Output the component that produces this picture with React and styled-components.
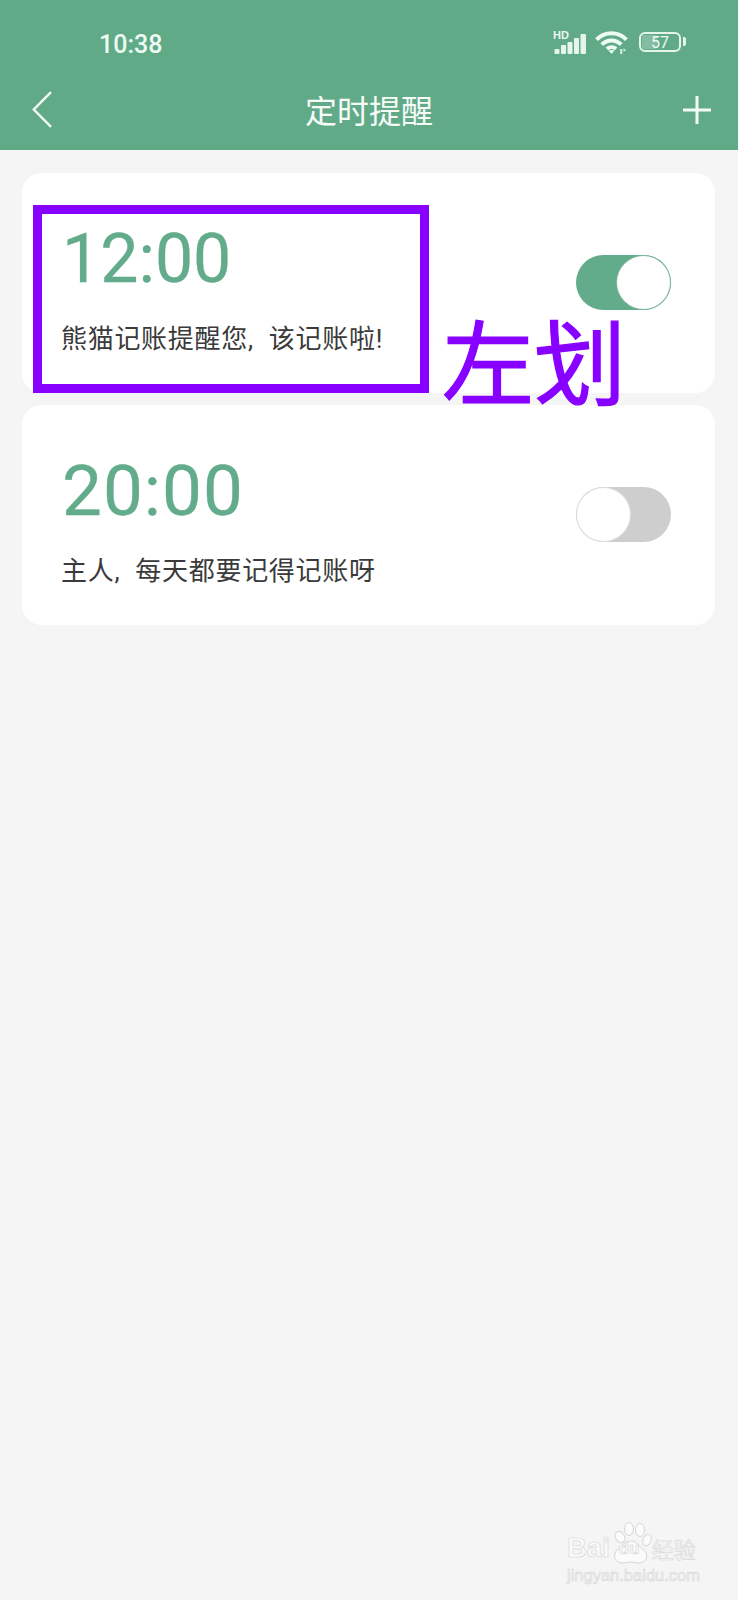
import React from "react";
import styled, { createGlobalStyle } from "styled-components";

const GlobalStyle = createGlobalStyle`
  html, body {
    margin: 0;
    padding: 0;
    background: #f5f5f5;
  }
  * {
    box-sizing: border-box;
  }
`;

const GREEN = "#60aa88";
const FONT = `Roboto, "Noto Sans CJK SC", sans-serif`;

const Screen = styled.div`
  position: relative;
  width: 738px;
  height: 1600px;
  overflow: hidden;
  background: #f5f5f5;
  font-family: ${FONT};
`;

const Header = styled.header`
  height: 150px;
  background: ${GREEN};
  color: #fff;
`;

const StatusBar = styled.div`
  height: 82px;
  padding: 30px 57px 0 99px;
  display: flex;
  justify-content: space-between;
  align-items: flex-start;
`;

const Clock = styled.span`
  font-size: 25px;
  font-weight: 500;
  line-height: 29px;
  color: #eefaf3;
`;

const StatusIcons = styled.div`
  display: flex;
  align-items: center;
  gap: 8px;
`;

const Battery = styled.div`
  position: relative;
  width: 42px;
  height: 20px;
  margin-left: 3px;
  border: 2.5px solid #e6f5ec;
  border-radius: 6px;
  display: flex;
  align-items: center;
  justify-content: center;
  font-size: 16px;
  line-height: 15px;
  color: #eefaf3;
  &::before {
    content: "";
    position: absolute;
    left: 1px;
    top: 1px;
    bottom: 1px;
    width: 15px;
    background: rgba(255, 255, 255, 0.22);
    border-radius: 1px;
  }
  &::after {
    content: "";
    position: absolute;
    right: -7px;
    top: 3px;
    width: 3px;
    height: 9px;
    background: #e6f5ec;
    border-radius: 0 2px 2px 0;
  }
`;

const NavBar = styled.div`
  height: 68px;
  padding: 0 27px 13px 32px;
  display: flex;
  align-items: center;
  justify-content: space-between;
`;

const Title = styled.h1`
  margin: 4px 0 0 3px;
  font-size: 32px;
  font-weight: 400;
  line-height: 40px;
  color: #f6fbf8;
`;

const List = styled.main`
  padding: 23px 23px 0 22px;
  display: flex;
  flex-direction: column;
  gap: 12px;
`;

const Card = styled.section`
  height: 220px;
  padding: 0 44px 0 39px;
  background: #fff;
  border-radius: 20px;
  display: flex;
  align-items: center;
  justify-content: space-between;
`;

const Info = styled.div`
  padding-top: 15px;
  display: flex;
  flex-direction: column;
  gap: 28px;
`;

const Time = styled.div`
  font-size: ${(p) => p.$size}px;
  line-height: 68px;
  letter-spacing: ${(p) => p.$spacing}px;
  -webkit-text-stroke: 0.3px #62ab8b;
  color: #62ab8b;
  margin-left: 1px;
`;

const Note = styled.div`
  font-size: 26px;
  line-height: 36px;
  letter-spacing: 0.7px;
  word-spacing: 8px;
  color: #3a3a3a;
`;

const Toggle = styled.div`
  width: 95px;
  height: 55px;
  margin-bottom: 2px;
  padding: 1px;
  border-radius: 28px;
  display: flex;
  justify-content: ${(p) => (p.$on ? "flex-end" : "flex-start")};
  background: ${(p) => (p.$on ? "#62ab8b" : "#cecece")};
`;

const Knob = styled.div`
  width: 53px;
  height: 53px;
  border-radius: 50%;
  background: #fff;
  box-shadow: 0 0 0 1px ${(p) => (p.$on ? "#7fb79c" : "#dedede")};
`;

const Frame = styled.div`
  position: absolute;
  left: 33px;
  top: 205px;
  width: 396px;
  height: 188px;
  border: 9px solid #8800ff;
`;

const SwipeLabel = styled.div`
  position: absolute;
  left: 442px;
  top: 295px;
  font-family: "Noto Sans CJK SC", sans-serif;
  font-size: 92px;
  font-weight: 400;
  -webkit-text-stroke: 1.2px #8800ff;
  line-height: 126px;
  color: #8800ff;
  white-space: nowrap;
`;

const Watermark = styled.div`
  position: absolute;
  left: 567px;
  top: 1520px;
  width: 135px;
  color: #fafafa;
  -webkit-text-stroke: 0.7px #d8d8d8;
  font-family: "Liberation Sans", "Noto Sans CJK SC", sans-serif;
`;

const BrandRow = styled.div`
  display: flex;
  align-items: flex-end;
  height: 46px;
`;

const BrandText = styled.span`
  font-size: 27.5px;
  font-weight: 700;
  line-height: 36px;
`;

const BrandCn = styled.span`
  font-size: 22px;
  line-height: 36px;
  font-family: "Noto Sans CJK SC", sans-serif;
`;

const Paw = styled.div`
  position: relative;
  width: 42px;
  height: 44px;
  flex: none;
`;

const PawLabel = styled.span`
  position: absolute;
  left: 9px;
  bottom: 8px;
  font-size: 17px;
  font-weight: 700;
  line-height: 18px;
`;

const BrandUrl = styled.div`
  font-size: 16.5px;
  line-height: 18px;
  white-space: nowrap;
`;

const bars = [
  { x: 1.5, w: 5, h: 5 },
  { x: 8, w: 5, h: 9 },
  { x: 14.5, w: 5, h: 12 },
  { x: 21, w: 5, h: 16 },
  { x: 27.5, w: 5.5, h: 20 },
];

const SignalIcon = () => (
  <svg width="34" height="24" viewBox="0 0 34 24">
    <text x="0" y="9" fontSize="11" fontWeight="700" fontFamily="Liberation Sans" fill="#eaf7ef">
      HD
    </text>
    <g fill="#e6f5ec">
      {bars.map((b) => (
        <rect key={b.x} x={b.x} y={24 - b.h} width={b.w} height={b.h} rx="1" />
      ))}
    </g>
  </svg>
);

const WifiIcon = () => (
  <svg width="33" height="24" viewBox="0 0 33 24">
    <g fill="none" stroke="#eefaf3" strokeWidth="4">
      <path d="M1.6 9.6C9.6 1 23.4 1 31.4 9.6" />
      <path d="M6.8 14.6C12 9 21 9 26.2 14.6" />
      <path d="M12 19C14.6 16.6 18.4 16.6 21 19" />
    </g>
    <path d="M13.6 20.8C15.2 19.6 17.8 19.6 19.4 20.8L16.5 23.8z" fill="#eefaf3" />
    <path d="M25 24v-5h2.4v5zM28.5 18l3 2.5-3 1z" fill="#c9e6d5" />
  </svg>
);

const BackIcon = () => (
  <svg width="20" height="37" viewBox="0 0 20 37">
    <path d="M19 1.2L1.8 18.5 19 35.8" fill="none" stroke="#f4fbf7" strokeWidth="2.4" />
  </svg>
);

const PlusIcon = () => (
  <svg width="28" height="28" viewBox="0 0 28 28">
    <path d="M14 0v28M0 14h28" stroke="#f4fbf7" strokeWidth="3" />
  </svg>
);

const PawIcon = () => (
  <svg width="42" height="44" viewBox="0 0 42 44" fill="#fbfbfb" stroke="#d6d6d6" strokeWidth="1">
    <ellipse cx="10" cy="15" rx="4.5" ry="6" transform="rotate(-30 10 15)" />
    <ellipse cx="19" cy="7" rx="4.5" ry="6.5" />
    <ellipse cx="30" cy="8" rx="4.5" ry="6.5" />
    <ellipse cx="37" cy="18" rx="4" ry="6" transform="rotate(20 37 18)" />
    <path d="M21 19c6 0 8 6 13 9 5 4 3 13-5 13-4 0-5-1-8-1s-5 1-8 1c-8 0-11-8-6-13 5-3 7-9 14-9z" />
  </svg>
);

const reminders = [
  { time: "12:00", note: "熊猫记账提醒您, 该记账啦!", on: true, size: 68, spacing: 0 },
  { time: "20:00", note: "主人, 每天都要记得记账呀", on: false, size: 71, spacing: 1 },
];

export default function App() {
  return (
    <Screen>
      <GlobalStyle />
      <Header>
        <StatusBar>
          <Clock>10:38</Clock>
          <StatusIcons>
            <SignalIcon />
            <WifiIcon />
            <Battery>57</Battery>
          </StatusIcons>
        </StatusBar>
        <NavBar>
          <BackIcon />
          <Title>定时提醒</Title>
          <PlusIcon />
        </NavBar>
      </Header>
      <List>
        {reminders.map((r) => (
          <Card key={r.time}>
            <Info>
              <Time $size={r.size} $spacing={r.spacing}>{r.time}</Time>
              <Note>{r.note}</Note>
            </Info>
            <Toggle $on={r.on}>
              <Knob $on={r.on} />
            </Toggle>
          </Card>
        ))}
      </List>
      <Frame />
      <SwipeLabel>左划</SwipeLabel>
      <Watermark>
        <BrandRow>
          <BrandText>Bai</BrandText>
          <Paw>
            <PawIcon />
            <PawLabel>du</PawLabel>
          </Paw>
          <BrandCn>经验</BrandCn>
        </BrandRow>
        <BrandUrl>jingyan.baidu.com</BrandUrl>
      </Watermark>
    </Screen>
  );
}
